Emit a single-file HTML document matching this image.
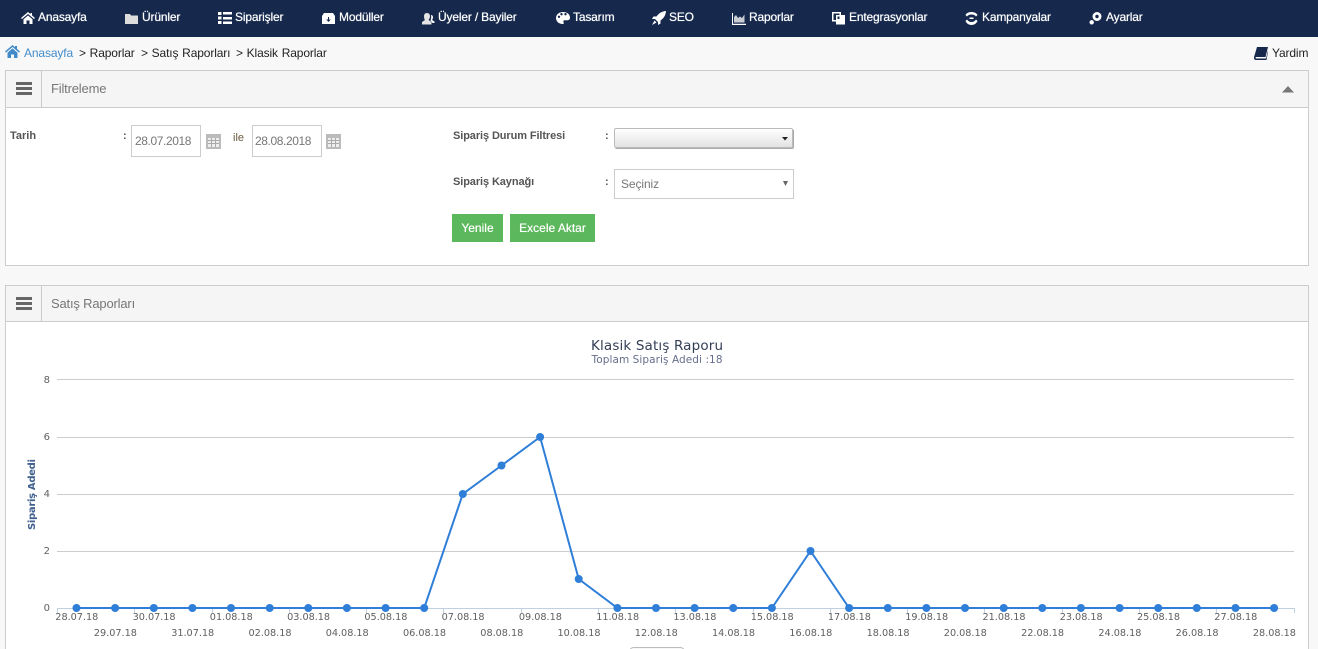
<!DOCTYPE html>
<html lang="tr">
<head>
<meta charset="utf-8">
<title>Klasik Raporlar</title>
<style>
html,body{margin:0;padding:0;width:1318px;height:649px;overflow:hidden;}
body{background:#f8f8f8;font-family:"Liberation Sans",Arial,sans-serif;font-size:12px;color:#222;}
#page{position:absolute;left:0;top:0;width:1318px;height:649px;overflow:hidden;background:#f8f8f8;}
.abs{position:absolute;white-space:nowrap;}
#nav{position:absolute;left:0;top:0;width:1318px;height:37px;background:#16294d;}
#nav .t{position:absolute;top:10px;line-height:14px;font-size:12px;letter-spacing:-.17px;color:#fff;white-space:nowrap;text-shadow:0 0 .6px #fff;}
#nav svg{position:absolute;fill:#fff;}
.bc{position:absolute;top:46px;line-height:14px;font-size:12px;letter-spacing:-.13px;word-spacing:.6px;white-space:nowrap;color:#222;}
.panel{position:absolute;left:5px;width:1302px;background:#fff;border:1px solid #ccc;}
.ph{position:absolute;left:0;top:0;width:1302px;height:36px;background:#f5f5f5;border-bottom:1px solid #ccc;}
.ph .sep{position:absolute;left:35px;top:0;width:1px;height:100%;background:#ccc;}
.ph .title{position:absolute;left:45px;top:10px;font-size:13px;letter-spacing:-.18px;line-height:16px;color:#777;white-space:nowrap;}
.bars{position:absolute;left:10px;top:11px;width:16px;height:14px;}
.bars i{display:block;height:3.4px;background:#666;margin-bottom:1.4px;}
.lbl{position:absolute;font-size:11px;font-weight:bold;line-height:13px;color:#555;white-space:nowrap;}
.inp{position:absolute;box-sizing:border-box;background:#fff;border:1px solid #ccc;color:#777;white-space:nowrap;}
.btn{position:absolute;top:214px;height:28px;line-height:28px;background:#5cb85c;color:#fff;font-size:12px;text-align:center;text-shadow:0 0 .5px #fff;}
</style>
</head>
<body>
<div id="page">
<div id="nav">
<svg style="left:21px;top:11px" width="14" height="14" viewBox="0 0 14 14"><path d="M7 1 0 7l1 1 6-5 6 5 1-1-3-2.600V2H9.500v1.100zM2.500 8.300 7 4.500l4.500 3.800V13H8.500V9.500h-3V13h-3z"/></svg>
<span class="t" style="left:38px">Anasayfa</span>
<svg style="left:125px;top:12px" width="14" height="12" viewBox="0 0 14 12"><path d="M0 2.500V12h13V3.500H6L5 2H0z" style="fill:#ddd"/></svg>
<span class="t" style="left:142px">Ürünler</span>
<svg style="left:218px;top:11px" width="14" height="14" viewBox="0 0 14 14"><path d="M0 1h3.500v3H0zM5 1h9v2.500H5zM0 5.500h3.500v3H0zM5 6h9v2.500H5zM0 10h3.500v3H0zM5 10.500h9V13H5z"/></svg>
<span class="t" style="left:235px">Siparişler</span>
<svg style="left:322px;top:12px" width="13" height="13" viewBox="0 0 13 13"><path fill-rule="evenodd" d="M2 1h9l2 3v8H0V4zM6 5v2.500H4.200L6.500 10l2.300-2.500H7V5z"/></svg>
<span class="t" style="left:339px">Modüller</span>
<svg style="left:421px;top:12px" width="14" height="13" viewBox="0 0 14 13"><path d="M6 1c2 0 3 1.500 3 3.200S8 7.500 7.500 8l3 2v2.500H1V10l3-2C3.500 7.500 3 6 3 4.200S4 1 6 1z" style="fill:#e4e4e4"/><path d="M10 3c1.500 0 2 1.200 2 2.400S11.400 7.600 11 8l2.500 1.500V11h-2L9.500 8.500C10 7.500 10.500 5 10 3z"/></svg>
<span class="t" style="left:438px">Üyeler / Bayiler</span>
<svg style="left:556px;top:12px" width="14" height="12" viewBox="0 0 14 12"><path fill-rule="evenodd" d="M7 0C3 0 0 2.500 0 6c0 3.500 3 6 6.500 6 1.500 0 1.500-1 1-1.800-.5-1 0-1.900 1.200-1.900H11c2 0 3-1 3-2.700C14 2.200 11 0 7 0zM3 6a1.200 1.200 0 1 1 0-2.400A1.200 1.200 0 0 1 3 6zm2.500-2.600a1.200 1.200 0 1 1 0-2.400 1.200 1.200 0 0 1 0 2.400zm4 0a1.200 1.200 0 1 1 0-2.400 1.200 1.200 0 0 1 0 2.400z"/></svg>
<span class="t" style="left:573px">Tasarım</span>
<svg style="left:652px;top:11px" width="14" height="14" viewBox="0 0 14 14"><path d="M14 0C10 .3 7 2 4.500 5.500H1.500L0 8h3l3 3v3l2.500-1.500v-3C12 7 13.700 4 14 0zM2.500 9.500 0 14l4.500-2.500z"/></svg>
<span class="t" style="left:669px">SEO</span>
<svg style="left:732px;top:12px" width="14" height="13" viewBox="0 0 14 13"><path d="M0 1h1v10.800h13V13H0z"/><path d="M2 10.500V5l2-2 2 3 2-1.500L10 6l2.500-3.500v8z" style="fill:#c9ccd3"/></svg>
<span class="t" style="left:749px">Raporlar</span>
<svg style="left:832px;top:11px" width="13" height="14" viewBox="0 0 13 14"><path fill-rule="evenodd" d="M0 1h9v3h4v9.500H4v-3H0zM1.500 2.500v6.500H4V4h3.500V2.500zM5.500 5.500v2.500h2v-2.500z"/></svg>
<span class="t" style="left:849px">Entegrasyonlar</span>
<svg style="left:965px;top:12px" width="13" height="13" viewBox="0 0 13 13"><path d="M6.500 0C9 0 11.500 1 12.500 3L11 4.500C10 3.200 8.500 2.500 6.500 2.500S3 3.200 2 4.500L.5 3C1.500 1 4 0 6.500 0zM.5 9 2 7.500C3 9 4.500 10 6.500 10S10 9 11 7.500L12.500 9c-1 2.500-3.500 4-6 4s-5-1.500-6-4z"/><path d="M4.500 5.500h4v1.500h-4z"/></svg>
<span class="t" style="left:982px">Kampanyalar</span>
<svg style="left:1089px;top:12px" width="13" height="13" viewBox="0 0 13 13"><path fill-rule="evenodd" d="M8 0a4.500 4.500 0 1 1 0 9 4.500 4.500 0 0 1 0-9zm0 2.800a1.700 1.700 0 1 0 0 3.400 1.700 1.700 0 0 0 0-3.400z"/><circle cx="2.700" cy="10.300" r="2.200"/></svg>
<span class="t" style="left:1106px">Ayarlar</span>
</div>

<svg class="abs" style="left:5px;top:45px" width="15" height="13" viewBox="0 0 15 13"><path fill="#428bca" d="M7.500 0 0 6.500l1 1.100 6.500-5.600L14 7.600l1-1.100-3-2.600V1h-2v1.200zM2.500 7.800 7.500 3.400 12.500 7.800V13H9V9.500H6V13H2.500z"/></svg>
<span class="bc" style="left:24px;color:#428bca">Anasayfa</span>
<span class="bc" style="left:79px">&gt; Raporlar</span>
<span class="bc" style="left:141px">&gt; Satış Raporları</span>
<span class="bc" style="left:236px">&gt; Klasik Raporlar</span>
<svg class="abs" style="left:1254px;top:47px" width="14" height="13" viewBox="0 0 14 13"><path fill="#16294d" d="M3 0h11l-2.500 10H2.200c-.8 0-.8 1.500 0 1.500H12l2-8v1.500L12.500 13H2C0 13-.3 11 .2 9.500z"/></svg>
<span class="bc" style="left:1272px;color:#222">Yardim</span>

<div class="panel" style="top:70px;height:194px;">
  <div class="ph"><div class="bars"><i></i><i></i><i></i></div><div class="sep"></div><div class="title">Filtreleme</div>
  <svg style="position:absolute;left:1276px;top:15px" width="12" height="7"><path fill="#777" d="M6 0 12 6.500H0z"/></svg></div>
</div>
<span class="lbl" style="left:10px;top:130px">Tarih</span>
<span class="lbl" style="left:123px;top:130px">:</span>
<div class="inp" style="left:131px;top:125px;width:70px;height:32px;line-height:31px;padding-left:3px;font-size:12px;letter-spacing:-.4px;">28.07.2018</div>
<svg class="abs" style="left:206px;top:134px" width="15" height="15" viewBox="0 0 15 15"><rect width="15" height="15" fill="#bbb"/><rect x="2" y="4" width="11" height="9" fill="#eee"/><path stroke="#aaa" stroke-width="1" d="M2 6.500h11M2 9.500h11M5.500 4v9M9.500 4v9"/></svg>
<span class="abs" style="left:233px;top:132px;font-size:11px;line-height:13px;color:#6b5a40">ile</span>
<div class="inp" style="left:252px;top:125px;width:70px;height:32px;line-height:31px;padding-left:2px;font-size:12px;letter-spacing:-.4px;">28.08.2018</div>
<svg class="abs" style="left:326px;top:134px" width="15" height="15" viewBox="0 0 15 15"><rect width="15" height="15" fill="#bbb"/><rect x="2" y="4" width="11" height="9" fill="#eee"/><path stroke="#aaa" stroke-width="1" d="M2 6.500h11M2 9.500h11M5.500 4v9M9.500 4v9"/></svg>

<span class="lbl" style="left:453px;top:130px;letter-spacing:-.1px">Sipariş Durum Filtresi</span>
<span class="lbl" style="left:605px;top:130px">:</span>
<div class="abs" style="left:614px;top:128px;width:179px;height:20px;box-sizing:border-box;border:1px solid #bbb;border-radius:2px;background:linear-gradient(#fff,#e2e2e2);box-shadow:1px 1px 0 #aaa;"></div>
<svg class="abs" style="left:782px;top:137px" width="6" height="4"><path fill="#222" d="M0 0h6L3 3.500z"/></svg>
<span class="lbl" style="left:453px;top:176px;letter-spacing:-.1px">Sipariş Kaynağı</span>
<span class="lbl" style="left:605px;top:176px">:</span>
<div class="inp" style="left:614px;top:169px;width:180px;height:30px;line-height:29px;padding-left:6px;font-size:12px;letter-spacing:-.1px;">Seçiniz</div>
<svg class="abs" style="left:783px;top:181px" width="5" height="5"><path fill="#666" d="M0 0h5L2.500 5z"/></svg>
<div class="btn" style="left:452px;width:51px;">Yenile</div>
<div class="btn" style="left:510px;width:85px;">Excele Aktar</div>

<div class="panel" style="top:285px;height:363px;border-bottom:0;">
  <div class="ph" style="height:35px"><div class="bars"><i></i><i></i><i></i></div><div class="sep"></div><div class="title">Satış Raporları</div></div>
</div>

<svg class="abs" style="left:0;top:322px" width="1308" height="327" viewBox="0 322 1308 327" font-family="'DejaVu Sans','Liberation Sans',sans-serif">
<text x="657" y="350" text-anchor="middle" font-size="13.500" fill="#333e55" textLength="132">Klasik Satış Raporu</text>
<text x="657" y="363" text-anchor="middle" font-size="10.500" fill="#666e8c" textLength="131">Toplam Sipariş Adedi :18</text>
<text transform="translate(35,530) rotate(-90)" font-size="10" font-weight="bold" fill="#40608f" textLength="71">Sipariş Adedi</text>
<g stroke="#ccc" stroke-width="1"><path d="M57 379.500H1294M57 437.500H1294M57 494.500H1294M57 551.500H1294"/></g>
<g fill="#606060" font-size="10" text-anchor="end">
<text x="50" y="383">8</text><text x="50" y="440">6</text><text x="50" y="497">4</text><text x="50" y="554">2</text><text x="50" y="611">0</text></g>
<path d="M57 608.500H1294" stroke="#c0d0e0" stroke-width="1"/>
<path stroke="#c0d0e0" d="M57.500 608v5M134.500 608v5M212.500 608v5M289.500 608v5M366.500 608v5M443.500 608v5M521.500 608v5M598.500 608v5M675.500 608v5M753.500 608v5M830.500 608v5M907.500 608v5M984.500 608v5M1062.500 608v5M1139.500 608v5M1216.500 608v5M1294.500 608v5"/>
<path fill="none" stroke="#2f7ed8" stroke-width="2" d="M76.500 608H424.200L462.800 494 501.500 465.500 540.100 437 578.700 579 617.400 608H771.900L810.500 551 849.100 608H1274.100"/>
<g fill="#2f7ed8">
<circle cx="76.500" cy="608" r="4"/><circle cx="115.100" cy="608" r="4"/><circle cx="153.800" cy="608" r="4"/><circle cx="192.400" cy="608" r="4"/><circle cx="231" cy="608" r="4"/><circle cx="269.700" cy="608" r="4"/><circle cx="308.300" cy="608" r="4"/><circle cx="346.900" cy="608" r="4"/><circle cx="385.600" cy="608" r="4"/><circle cx="424.200" cy="608" r="4"/><circle cx="462.800" cy="494" r="4"/><circle cx="501.500" cy="465.500" r="4"/><circle cx="540.100" cy="437" r="4"/><circle cx="578.700" cy="579" r="4"/><circle cx="617.400" cy="608" r="4"/><circle cx="656" cy="608" r="4"/><circle cx="694.600" cy="608" r="4"/><circle cx="733.200" cy="608" r="4"/><circle cx="771.900" cy="608" r="4"/><circle cx="810.500" cy="551" r="4"/><circle cx="849.100" cy="608" r="4"/><circle cx="887.800" cy="608" r="4"/><circle cx="926.400" cy="608" r="4"/><circle cx="965" cy="608" r="4"/><circle cx="1003.700" cy="608" r="4"/><circle cx="1042.300" cy="608" r="4"/><circle cx="1080.900" cy="608" r="4"/><circle cx="1119.600" cy="608" r="4"/><circle cx="1158.200" cy="608" r="4"/><circle cx="1196.800" cy="608" r="4"/><circle cx="1235.500" cy="608" r="4"/><circle cx="1274.100" cy="608" r="4"/>
</g>
<g fill="#606060" font-size="9.700" text-anchor="middle" letter-spacing="-.02">
<text x="76.800" y="620">28.07.18</text><text x="115.400" y="636">29.07.18</text><text x="154.100" y="620">30.07.18</text><text x="192.700" y="636">31.07.18</text><text x="231.300" y="620">01.08.18</text><text x="270" y="636">02.08.18</text><text x="308.600" y="620">03.08.18</text><text x="347.200" y="636">04.08.18</text><text x="385.900" y="620">05.08.18</text><text x="424.500" y="636">06.08.18</text><text x="463.100" y="620">07.08.18</text><text x="501.800" y="636">08.08.18</text><text x="540.400" y="620">09.08.18</text><text x="579" y="636">10.08.18</text><text x="617.700" y="620">11.08.18</text><text x="656.300" y="636">12.08.18</text><text x="694.900" y="620">13.08.18</text><text x="733.500" y="636">14.08.18</text><text x="772.200" y="620">15.08.18</text><text x="810.800" y="636">16.08.18</text><text x="849.400" y="620">17.08.18</text><text x="888.100" y="636">18.08.18</text><text x="926.700" y="620">19.08.18</text><text x="965.300" y="636">20.08.18</text><text x="1004" y="620">21.08.18</text><text x="1042.600" y="636">22.08.18</text><text x="1081.200" y="620">23.08.18</text><text x="1119.900" y="636">24.08.18</text><text x="1158.500" y="620">25.08.18</text><text x="1197.100" y="636">26.08.18</text><text x="1235.800" y="620">27.08.18</text><text x="1274.400" y="636">28.08.18</text>
</g>
<rect x="629.500" y="647.500" width="55" height="20" rx="4" fill="#f7f7f7" stroke="#bbb"/>
</svg>
</div>
</body>
</html>
